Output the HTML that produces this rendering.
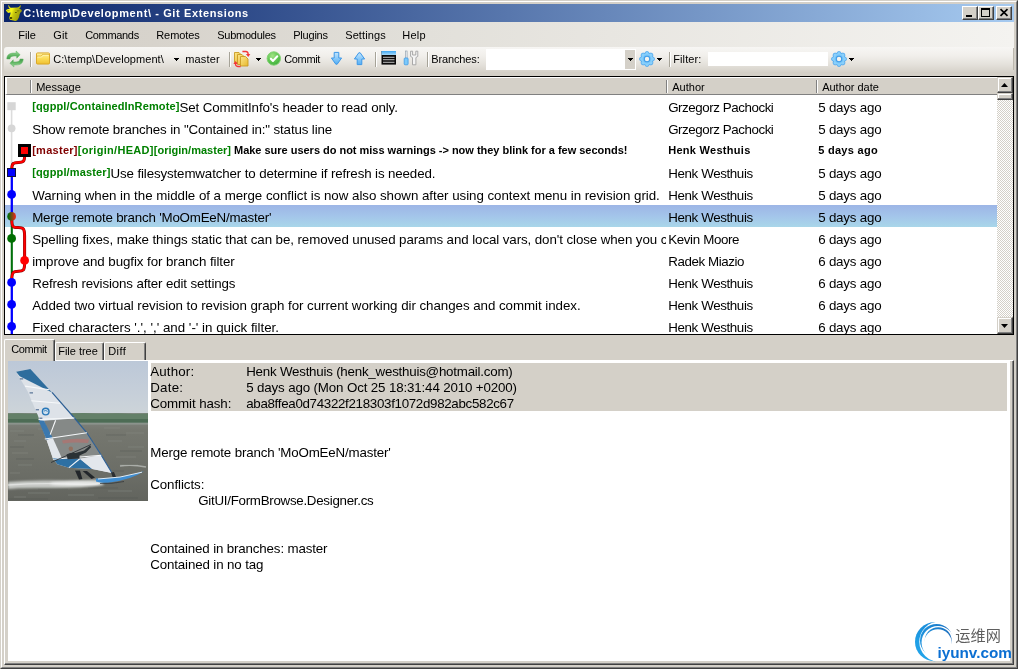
<!DOCTYPE html>
<html><head><meta charset="utf-8"><title>Git Extensions</title>
<style>
*{box-sizing:border-box;margin:0;padding:0}
html,body{width:1018px;height:669px;overflow:hidden;background:#d4d0c8}
body{font-family:"Liberation Sans","Noto Sans CJK SC",sans-serif;font-size:11px;color:#000;position:relative}
.abs{position:absolute}
#root{position:absolute;left:0;top:0;width:1018px;height:669px;overflow:hidden;will-change:transform}
#win{position:absolute;left:0;top:0;width:1018px;height:669px;background:#d4d0c8;border-top:1px solid #d4d0c8;border-left:1px solid #d4d0c8;border-right:1px solid #404040;border-bottom:1px solid #404040}
#win2{position:absolute;left:1px;top:1px;width:1016px;height:667px;border-top:1px solid #fff;border-left:1px solid #fff;border-right:1px solid #808080;border-bottom:1px solid #808080}
#title{position:absolute;left:4px;top:4px;width:1010px;height:18px;background:linear-gradient(to right,#0a246a 0%,#a6caf0 100%);color:#fff;font-weight:bold;font-size:11px;line-height:18px;white-space:nowrap}
#title span{position:absolute;left:20px;top:0}
.cbtn{position:absolute;top:6px;width:16px;height:14px;background:#d4d0c8;border-top:1px solid #fff;border-left:1px solid #fff;border-right:1px solid #404040;border-bottom:1px solid #404040;box-shadow:inset -1px -1px 0 #808080}
#menu{position:absolute;left:4px;top:22px;width:1010px;height:25px;background:linear-gradient(to right,#d4d0c8 0%,#d7d3cc 15%,#e2e0da 42%,#e8e6e1 60%,#f4f3f0 100%)}
#menu span{position:absolute;top:1px;line-height:24px;font-size:11px;white-space:nowrap}
#tool{position:absolute;left:4px;top:47px;width:1010px;height:25px;border-radius:3px 0 0 3px;background:linear-gradient(to bottom,#f7f6f4 0%,#f1efeb 35%,#e4e1db 70%,#d6d2ca 100%)}
.tt{position:absolute;top:47px;line-height:24px;font-size:11px;white-space:nowrap}
.sep{position:absolute;top:52px;width:2px;height:15px;border-left:1px solid #a6a398;border-right:1px solid #fff}
.dar{position:absolute;width:0;height:0;border-left:2.5px solid transparent;border-right:2.5px solid transparent;border-top:3px solid #000}
#grid{position:absolute;left:4px;top:76px;width:1010px;height:259px;background:#fff;border:1px solid #000;overflow:hidden}
#ghead{position:absolute;left:0;top:0;width:992px;height:18px;background:#d4d0c8;border-top:1px solid #fff;border-left:2px solid #fff;border-bottom:1px solid #808080}
.hsep{position:absolute;top:2px;width:2px;height:13px;border-left:1px solid #808080;border-right:1px solid #fff}
.ht{position:absolute;top:1px;line-height:17px;font-size:11px;white-space:nowrap}
.row{position:absolute;left:0;width:992px;height:22px}
.row span{position:absolute;top:2px;line-height:22px;font-size:13.33px;white-space:nowrap}
.row .m{left:27.2px;width:633.8px;overflow:hidden;height:20px}
.row .m i{font-style:normal;font-weight:bold;font-size:11px;position:relative;top:-2.5px}.row .m b{font-size:11px;position:relative;top:-2px}.row.bold .a,.row.bold .d{font-size:11px;top:0px}
.row .m u{text-decoration:none}
.g{color:#008000}.r{color:#800000}
.row .a{left:663.2px}.row .d{left:813.2px}
.sel{background:linear-gradient(to bottom,#9db5e6 0%,#a3c5ea 50%,#a9d6e9 100%)}
#sb{position:absolute;left:992px;top:0;width:16px;height:257px;background-color:#e9e7e3;background-image:conic-gradient(#fff 25%,#d4d0c8 0 50%,#fff 0 75%,#d4d0c8 0);background-size:2px 2px}
.sbtn{position:absolute;left:0;width:16px;background:#d4d0c8;border-top:1px solid #d4d0c8;border-left:1px solid #d4d0c8;border-right:1px solid #404040;border-bottom:1px solid #404040;box-shadow:inset -1px -1px 0 #808080,inset 1px 1px 0 #fff}
.tab{position:absolute;background:#d4d0c8;border-top:1px solid #fff;border-left:1px solid #fff;border-right:1px solid #404040;border-radius:2px 2px 0 0;box-shadow:inset -1px 0 0 #808080;font-size:11px;white-space:nowrap}
#page{position:absolute;left:4px;top:360px;width:1010px;height:305px;background:#d4d0c8;border-left:1px solid #fff;border-top:1px solid #fff;border-right:1px solid #404040;border-bottom:1px solid #404040;box-shadow:inset -1px -1px 0 #808080}#pagein{position:absolute;left:8px;top:361px;width:1002px;height:300px;background:#fff}
#dh{position:absolute;left:151px;top:363px;width:856px;height:48px;background:#d4d0c8}
.dt{position:absolute;font-size:13.33px;line-height:16px;white-space:nowrap;margin-top:1px}

#ttl,#menu span,.ht,.tt,.dt,.tab span{margin-left:-0.8px}

#ttl{letter-spacing:0.613px}#m1{letter-spacing:-0.034px}#m2{letter-spacing:0.179px}#m3{letter-spacing:-0.331px}#m4{letter-spacing:-0.062px}#m5{letter-spacing:-0.256px}#m6{letter-spacing:-0.211px}#m7{letter-spacing:0.106px}#m8{letter-spacing:0.244px}#h1{letter-spacing:-0.006px}#h2{letter-spacing:0.030px}#h3{letter-spacing:-0.025px}#l1{letter-spacing:0.123px}#x1{letter-spacing:-0.109px}#x2{letter-spacing:-0.131px}#l3a{letter-spacing:0.274px}#l3b{letter-spacing:0.299px}#l3c{letter-spacing:0.012px}#x3{letter-spacing:-0.016px}#l4{letter-spacing:0.135px}#x4{letter-spacing:-0.126px}#x5{letter-spacing:-0.036px}#x6{letter-spacing:-0.207px}#x7{letter-spacing:-0.091px}#x8{letter-spacing:-0.078px}#x9{letter-spacing:-0.137px}#x10{letter-spacing:-0.045px}#x11{letter-spacing:-0.006px}#a1{letter-spacing:-0.435px}#a2{letter-spacing:-0.435px}#a3{letter-spacing:0.288px}#a4{letter-spacing:-0.369px}#a5{letter-spacing:-0.369px}#a6{letter-spacing:-0.369px}#a7{letter-spacing:-0.348px}#a8{letter-spacing:-0.413px}#a9{letter-spacing:-0.369px}#a10{letter-spacing:-0.369px}#a11{letter-spacing:-0.369px}#d1{letter-spacing:-0.202px}#d2{letter-spacing:-0.202px}#d3{letter-spacing:0.294px}#d4{letter-spacing:-0.202px}#d5{letter-spacing:-0.202px}#d6{letter-spacing:-0.202px}#d7{letter-spacing:-0.202px}#d8{letter-spacing:-0.202px}#d9{letter-spacing:-0.202px}#d10{letter-spacing:-0.202px}#d11{letter-spacing:-0.202px}#tb_c{letter-spacing:-0.382px}#tb_f{letter-spacing:-0.017px}#tb_d{letter-spacing:0.447px}#k1{letter-spacing:0.159px}#v1{letter-spacing:-0.225px}#k2{letter-spacing:0.248px}#v2{letter-spacing:-0.141px}#k3{letter-spacing:-0.093px}#v3{letter-spacing:-0.308px}#b1{letter-spacing:-0.171px}#b2{letter-spacing:-0.071px}#b3{letter-spacing:-0.273px}#b4{letter-spacing:-0.152px}#b5{letter-spacing:-0.132px}#tt1{letter-spacing:0.058px}#tt2{letter-spacing:0.163px}#tt3{letter-spacing:-0.348px}#tt4{letter-spacing:-0.115px}#tt5{letter-spacing:0.114px}
</style></head><body>
<div id="root">
<div id="win"></div><div id="win2"></div>
<div id="title"><span id="ttl">C:\temp\Development\ - Git Extensions</span></div>
<div class="cbtn" style="left:962px"></div><div class="cbtn" style="left:978px"></div><div class="cbtn" style="left:996px"></div>
<div class="abs" style="left:966px;top:15px;width:6px;height:2px;background:#000"></div>
<div class="abs" style="left:981px;top:8px;width:9px;height:9px;border:1px solid #000;border-top-width:2px"></div>
<svg class="abs" style="left:999px;top:8px" width="10" height="9" viewBox="0 0 10 9"><path d="M1.5 1.2 L8.5 7.8 M8.5 1.2 L1.5 7.8" stroke="#000" stroke-width="1.7" fill="none"/></svg>
<svg class="abs" style="left:5px;top:4px" width="19" height="18" viewBox="0 0 19 18">
<defs><linearGradient id="cw" x1="0" y1="0" x2="1" y2="0.35"><stop offset="0" stop-color="#e6e60c"/><stop offset="0.42" stop-color="#f8f818"/><stop offset="0.62" stop-color="#c4c40c"/><stop offset="1" stop-color="#9a9a06"/></linearGradient>
<filter id="cb" x="-10%" y="-10%" width="120%" height="120%"><feGaussianBlur stdDeviation="0.35"/></filter></defs>
<g filter="url(#cb)">
<path d="M3.2 1.2 Q4.3 1 4.3 2.2 Q4.5 3.6 6 3.7 L12.2 3.5 Q14 3.4 14.9 1.8 Q15.5 1 16 1.6 Q15.6 4.2 14 4.8 L15.2 5 Q16.6 5.6 16.9 6.8 Q16.4 8.4 15.2 8.8 L14.6 10.4 L13.9 13.4 Q13 15.8 11 16.9 Q9.4 17.2 8.2 16.6 L5 15.7 Q4 14.6 4.4 13.2 L5.5 9.8 L5.4 8.2 L3.8 8.9 Q2.2 8.4 0.9 6.4 Q1.6 5 3 4.9 L5 4.9 Q3.4 4 3.2 1.2 Z" fill="url(#cw)"/>
<path d="M11.6 6.4 Q13.4 5.6 14.8 6.6 Q14 7.8 12.2 7.8 Z" fill="#7e7e08" opacity="0.75"/>
<ellipse cx="10.9" cy="8.5" rx="1" ry="0.55" fill="#4a4a04"/>
<ellipse cx="5.9" cy="13.9" rx="1.4" ry="1" fill="#3e3a02"/>
<path d="M2 6.2 Q3.4 5.6 4.8 6.6 Q3.6 7.6 2.6 7.4 Z" fill="#a0a008" opacity="0.7"/>
</g>
</svg>

<div id="menu"><span id="m1" style="left:15px">File</span><span id="m2" style="left:50px">Git</span><span id="m3" style="left:82px">Commands</span><span id="m4" style="left:153px">Remotes</span><span id="m5" style="left:214px">Submodules</span><span id="m6" style="left:290px">Plugins</span><span id="m7" style="left:342px">Settings</span><span id="m8" style="left:399px">Help</span></div>
<div id="tool"></div>
<svg class="abs" style="left:6px;top:50px" width="18" height="18" viewBox="0 0 18 18">
<defs><linearGradient id="gg" x1="0" y1="0" x2="0" y2="1"><stop offset="0" stop-color="#a4dca2"/><stop offset="0.55" stop-color="#62b764"/><stop offset="1" stop-color="#3f9a48"/></linearGradient></defs>
<g id="rfa"><path d="M0.8 8.9 C1 3.6 5 2.7 10.2 3.1 L10.1 1 L14.1 4.7 L10.8 8.2 L10.6 6.1 C6.5 5.7 4.4 6.2 3.9 9 Z" fill="url(#gg)" stroke="#5fb062" stroke-width="0.5" stroke-linejoin="round"/></g>
<use href="#rfa" transform="rotate(180 9 9)"/>
</svg>
<div class="sep" style="left:30px"></div>
<svg class="abs" style="left:35px;top:51.5px" width="16" height="13" viewBox="0 0 16 14" preserveAspectRatio="none">
<defs><linearGradient id="fg" x1="0" y1="0" x2="0" y2="1"><stop offset="0" stop-color="#fff0a0"/><stop offset="0.5" stop-color="#fbdc58"/><stop offset="1" stop-color="#efc030"/></linearGradient></defs>
<path d="M1.5 2 Q1.5 1 2.5 1 L13.5 1 Q14.5 1 14.5 2 L14.5 12 Q14.5 13 13.5 13 L2.5 13 Q1.5 13 1.5 12 Z" fill="url(#fg)" stroke="#d8a624" stroke-width="1"/>
<path d="M2 4.5 L6.2 4.5 L7.6 2.6 L14 2.6" fill="none" stroke="#e0ae2c" stroke-width="0.9"/>
<path d="M2.4 5.4 L6.6 5.4 L8 3.5 L13.6 3.5" fill="none" stroke="#fff6c0" stroke-width="0.8"/>
</svg>
<span class="tt" id="tt1" style="left:54px">C:\temp\Development\</span>
<svg class="abs" style="left:174px;top:58px" width="5" height="3" viewBox="0 0 5 3" shape-rendering="crispEdges"><path d="M0 0h5v1h-5zM1 1h3v1h-3zM2 2h1v1h-1z" fill="#000"/></svg>
<span class="tt" id="tt2" style="left:186px">master</span>
<div class="sep" style="left:229px"></div>
<svg class="abs" style="left:233px;top:50px" width="18" height="18" viewBox="0 0 18 18">
<defs><linearGradient id="dg" x1="0" y1="0" x2="1" y2="1"><stop offset="0" stop-color="#fce58a"/><stop offset="1" stop-color="#e8b92e"/></linearGradient></defs>
<path d="M1.5 2.5 L6 2.5 L8.5 5 L8.5 12.5 L1.5 12.5 Z" fill="url(#dg)" stroke="#c99a22" stroke-width="0.9"/>
<path d="M4.5 4.5 L9 4.5 L11.5 7 L11.5 14.5 L4.5 14.5 Z" fill="url(#dg)" stroke="#c99a22" stroke-width="0.9"/>
<path d="M7.5 6.5 L12.5 6.5 L15 9 L15 16 L7.5 16 Z" fill="url(#dg)" stroke="#c99a22" stroke-width="0.9"/>
<path d="M9.4 1.5 L12.8 1.5 Q15.2 1.6 15.2 4.4" fill="none" stroke="#f43838" stroke-width="1.3"/>
<path d="M12.9 4.1 L15.2 7 L17.3 4.1 Z" fill="#f43838"/>
<path d="M7.7 16.5 L4.8 16.5 Q2.4 16.4 2.4 13.6" fill="none" stroke="#f43838" stroke-width="1.3"/>
<path d="M0.4 13.9 L2.5 11 L4.8 13.9 Z" fill="#f43838"/>
</svg>
<svg class="abs" style="left:256px;top:58px" width="5" height="3" viewBox="0 0 5 3" shape-rendering="crispEdges"><path d="M0 0h5v1h-5zM1 1h3v1h-3zM2 2h1v1h-1z" fill="#000"/></svg>
<svg class="abs" style="left:265px;top:50px" width="18" height="18" viewBox="0 0 18 18">
<defs><radialGradient id="cg" cx="0.4" cy="0.3" r="0.8"><stop offset="0" stop-color="#a2e486"/><stop offset="0.6" stop-color="#58c24c"/><stop offset="1" stop-color="#3aa63c"/></radialGradient></defs>
<circle cx="8.8" cy="8.5" r="6.7" fill="url(#cg)" stroke="#84d274" stroke-width="1"/>
<path d="M5.9 8.7 L8 10.9 L12.3 6.3" fill="none" stroke="#fff" stroke-width="2.1" stroke-linecap="round" stroke-linejoin="round"/>
</svg>
<span class="tt" id="tt3" style="left:285px">Commit</span>
<svg class="abs" style="left:329px;top:51px" width="16" height="16" viewBox="0 0 16 16">
<defs><linearGradient id="bg1" x1="0" y1="0" x2="0" y2="1"><stop offset="0" stop-color="#c2e5fd"/><stop offset="1" stop-color="#55aff4"/></linearGradient></defs>
<path d="M5.2 1.4 L9.8 1.4 L9.8 7 L12.6 7 L8.2 13.2 L6.8 13.2 L2.4 7 L5.2 7 Z" fill="url(#bg1)" stroke="#3d98e8" stroke-width="1" stroke-linejoin="round"/>
</svg>
<svg class="abs" style="left:352px;top:51px" width="16" height="16" viewBox="0 0 16 16">
<path d="M5.2 13.6 L9.8 13.6 L9.8 8 L12.6 8 L8.2 1.8 L6.8 1.8 L2.4 8 L5.2 8 Z" fill="url(#bg1)" stroke="#3d98e8" stroke-width="1" stroke-linejoin="round"/>
</svg>
<div class="sep" style="left:375px"></div>
<svg class="abs" style="left:381px;top:50px" width="16" height="16" viewBox="0 0 16 16">
<defs><linearGradient id="lg1" x1="0" y1="0" x2="0" y2="1"><stop offset="0" stop-color="#3fa6f2"/><stop offset="1" stop-color="#a8dcfb"/></linearGradient></defs>
<rect x="0.5" y="1" width="14.5" height="13.6" fill="#0a0a0a"/>
<rect x="0.5" y="1" width="14.5" height="4" fill="url(#lg1)"/>
<rect x="2" y="6.8" width="11.5" height="0.9" fill="#d6d6d6"/><rect x="2" y="9.3" width="11.5" height="0.9" fill="#d6d6d6"/><rect x="2" y="11.8" width="11.5" height="0.9" fill="#d6d6d6"/>
</svg>
<svg class="abs" style="left:403px;top:50px" width="17" height="16" viewBox="0 0 17 16">
<rect x="2.3" y="1" width="1.8" height="7.2" fill="#eef2f6" stroke="#8a98a6" stroke-width="0.6"/>
<rect x="1.2" y="8" width="3.9" height="6.8" rx="0.9" fill="#7cc9fa" stroke="#3f9be6" stroke-width="0.8"/>
<path d="M7.6 1.2 L9.6 1.2 L9.6 5 L12.8 5 L12.8 1.2 L14.8 1.2 L14.8 6.4 L12.9 7.6 L12.9 14.8 L9.5 14.8 L9.5 7.6 L7.6 6.4 Z" fill="#f4f4f4" stroke="#a0a0a0" stroke-width="0.9" stroke-linejoin="round"/>
</svg>
<div class="sep" style="left:427px"></div>
<span class="tt" id="tt4" style="left:432px">Branches:</span>
<div class="abs" style="left:486px;top:49px;width:150px;height:21px;background:#fff"></div>
<div class="abs" style="left:625px;top:50px;width:10px;height:19px;background:#d4d0c8"></div>
<svg class="abs" style="left:628px;top:58px" width="5" height="3" viewBox="0 0 5 3" shape-rendering="crispEdges"><path d="M0 0h5v1h-5zM1 1h3v1h-3zM2 2h1v1h-1z" fill="#000"/></svg>
<svg class="abs" style="left:638px;top:50px" width="18" height="18" viewBox="0 0 18 18">
<defs><radialGradient id="gr" cx="0.5" cy="0.5" r="0.5"><stop offset="0.3" stop-color="#4aa8ee"/><stop offset="0.7" stop-color="#7cccf8"/><stop offset="1" stop-color="#4fa8ec"/></radialGradient></defs>
<g id="gear"><g fill="#8ad0fb" stroke="#4aa4ee" stroke-width="0.8"><circle cx="9.00" cy="3.60" r="2.1"/><circle cx="12.82" cy="5.18" r="2.1"/><circle cx="14.40" cy="9.00" r="2.1"/><circle cx="12.82" cy="12.82" r="2.1"/><circle cx="9.00" cy="14.40" r="2.1"/><circle cx="5.18" cy="12.82" r="2.1"/><circle cx="3.60" cy="9.00" r="2.1"/><circle cx="5.18" cy="5.18" r="2.1"/></g>
<circle cx="9" cy="9" r="5.6" fill="#8ad0fb"/><circle cx="9" cy="9" r="4.4" fill="#74c3f8"/>
<circle cx="9" cy="9" r="3.2" fill="#3f9ce8"/><circle cx="9" cy="9" r="2.2" fill="#f4f3f0"/></g>
</svg>
<svg class="abs" style="left:657px;top:58px" width="5" height="3" viewBox="0 0 5 3" shape-rendering="crispEdges"><path d="M0 0h5v1h-5zM1 1h3v1h-3zM2 2h1v1h-1z" fill="#000"/></svg>
<div class="sep" style="left:669px"></div>
<span class="tt" id="tt5" style="left:674px">Filter:</span>
<div class="abs" style="left:708px;top:52px;width:120px;height:14px;background:#fff"></div>
<svg class="abs" style="left:830px;top:50px" width="18" height="18" viewBox="0 0 18 18"><use href="#gear"/></svg>
<svg class="abs" style="left:849px;top:58px" width="5" height="3" viewBox="0 0 5 3" shape-rendering="crispEdges"><path d="M0 0h5v1h-5zM1 1h3v1h-3zM2 2h1v1h-1z" fill="#000"/></svg>
<div class="abs" style="left:1013px;top:48px;width:1px;height:22px;background:#bcb8ae"></div>

<div id="grid">
<div id="ghead"><div class="hsep" style="left:23px"></div><span class="ht" id="h1" style="left:30px">Message</span><div class="hsep" style="left:659px"></div><span class="ht" id="h2" style="left:666px">Author</span><div class="hsep" style="left:809px"></div><span class="ht" id="h3" style="left:816px">Author date</span></div>
<div class="row " style="top:18px"><span class="m"><i class="g" id="l1">[qgppl/ContainedInRemote]</i><u id="x1">Set CommitInfo's header to read only.</u></span><span class="a" id="a1">Grzegorz Pachocki</span><span class="d" id="d1">5 days ago</span></div>
<div class="row " style="top:40px"><span class="m"><u id="x2">Show remote branches in "Contained in:" status line</u></span><span class="a" id="a2">Grzegorz Pachocki</span><span class="d" id="d2">5 days ago</span></div>
<div class="row bold" style="top:62px"><span class="m"><i class="r" id="l3a">[master]</i><i class="g" id="l3b">[origin/HEAD]</i><i class="g" id="l3c">[origin/master]</i><b id="x3" style="margin-left:3px">Make sure users do not miss warnings -&gt; now they blink for a few seconds!</b></span><span class="a" id="a3" style="font-weight:bold">Henk Westhuis</span><span class="d" id="d3" style="font-weight:bold">5 days ago</span></div>
<div class="row " style="top:84px"><span class="m"><i class="g" id="l4">[qgppl/master]</i><u id="x4">Use filesystemwatcher to determine if refresh is needed.</u></span><span class="a" id="a4">Henk Westhuis</span><span class="d" id="d4">5 days ago</span></div>
<div class="row " style="top:106px"><span class="m"><u id="x5">Warning when in the middle of a merge conflict is now also shown after using context menu in revision grid.</u></span><span class="a" id="a5">Henk Westhuis</span><span class="d" id="d5">5 days ago</span></div>
<div class="row sel" style="top:128px"><span class="m"><u id="x6">Merge remote branch 'MoOmEeN/master'</u></span><span class="a" id="a6">Henk Westhuis</span><span class="d" id="d6">5 days ago</span></div>
<div class="row " style="top:150px"><span class="m"><u id="x7">Spelling fixes, make things static that can be, removed unused params and local vars, don't close when you</u> c</span><span class="a" id="a7">Kevin Moore</span><span class="d" id="d7">6 days ago</span></div>
<div class="row " style="top:172px"><span class="m"><u id="x8">improve and bugfix for branch filter</u></span><span class="a" id="a8">Radek Miazio</span><span class="d" id="d8">6 days ago</span></div>
<div class="row " style="top:194px"><span class="m"><u id="x9">Refresh revisions after edit settings</u></span><span class="a" id="a9">Henk Westhuis</span><span class="d" id="d9">6 days ago</span></div>
<div class="row " style="top:216px"><span class="m"><u id="x10">Added two virtual revision to revision graph for current working dir changes and commit index.</u></span><span class="a" id="a10">Henk Westhuis</span><span class="d" id="d10">6 days ago</span></div>
<div class="row " style="top:238px"><span class="m"><u id="x11">Fixed characters '.', ',' and '-' in quick filter.</u></span><span class="a" id="a11">Henk Westhuis</span><span class="d" id="d11">6 days ago</span></div>
<div id="sb"><div class="sbtn" style="top:0px;height:16px"></div><div class="sbtn" style="top:16px;height:7px"></div><div class="sbtn" style="top:240px;height:17px"></div>
<svg class="abs" style="left:4px;top:5px" width="8" height="6" viewBox="0 0 8 6"><path d="M0 5 L3.5 1 L7 5 Z" fill="#000"/></svg>
<svg class="abs" style="left:4px;top:246px" width="8" height="6" viewBox="0 0 8 6"><path d="M0 1 L3.5 5 L7 1 Z" fill="#000"/></svg></div>
<svg class="abs" style="left:0;top:0" width="30" height="257" viewBox="5 77 30 257">
<defs><linearGradient id="mg" x1="0" y1="0" x2="1" y2="0"><stop offset="0.15" stop-color="#0b6b0b"/><stop offset="0.9" stop-color="#e02a1a"/></linearGradient></defs>
<path d="M11.6 106 L11.6 166" stroke="#dcdcdc" stroke-width="1.6" fill="none"/>
<rect x="7.3" y="102.2" width="8.4" height="8" fill="#d6d6d6"/>
<circle cx="11.6" cy="128.3" r="3.9" fill="#d6d6d6"/>
<path d="M11.8 172 L11.8 216" stroke="#0000ff" stroke-width="2.3" fill="none"/>
<path d="M11.8 218 L11.8 280" stroke="#00700a" stroke-width="2.1" fill="none"/>
<path d="M11.8 282 L11.8 334" stroke="#0000ff" stroke-width="2.3" fill="none"/>
<path d="M24.6 156 C24.6 162 23 162.2 18.5 162.4 C13.5 162.6 11.8 163 11.8 169" stroke="#7a0000" stroke-width="3" fill="none"/>
<path d="M24.6 156 C24.6 162 23 162.2 18.5 162.4 C13.5 162.6 11.8 163 11.8 169" stroke="#ff0000" stroke-width="2.1" fill="none"/>
<path d="M11.8 219 C11.8 227.5 13 227.5 18 227.5 C23 227.5 24.6 228 24.6 236 L24.6 258" stroke="#7a0000" stroke-width="3" fill="none"/>
<path d="M11.8 219 C11.8 227.5 13 227.5 18 227.5 C23 227.5 24.6 228 24.6 236 L24.6 258" stroke="#ff0000" stroke-width="2.1" fill="none"/>
<path d="M24.6 263 C24.6 271 23 271.2 18.5 271.2 C13.5 271.2 11.8 272 11.8 280" stroke="#7a0000" stroke-width="3" fill="none"/>
<path d="M24.6 263 C24.6 271 23 271.2 18.5 271.2 C13.5 271.2 11.8 272 11.8 280" stroke="#ff0000" stroke-width="2.1" fill="none"/>
<rect x="18" y="144" width="13" height="13" fill="#000"/><rect x="21" y="147" width="7" height="7" fill="#ff0000"/>
<rect x="7" y="168" width="9" height="9" fill="#101040"/><rect x="8" y="169" width="7" height="7" fill="#0000ff"/>
<circle cx="11.6" cy="194.4" r="4.4" fill="#0000ff"/>
<circle cx="11.6" cy="216.4" r="4.4" fill="url(#mg)"/>
<circle cx="11.6" cy="238.4" r="4.4" fill="#006e00"/>
<circle cx="24.6" cy="260.4" r="4.4" fill="#ff0000"/>
<circle cx="11.6" cy="282.4" r="4.4" fill="#0000ff"/>
<circle cx="11.6" cy="304.4" r="4.4" fill="#0000ff"/>
<circle cx="11.6" cy="326.4" r="4.4" fill="#0000ff"/>
</svg>

</div>
<div id="page"></div><div id="pagein"></div>
<div class="tab" style="left:4px;top:339px;width:51px;height:22px;line-height:19px;padding-left:7px"><span id="tb_c">Commit</span></div>
<div class="tab" style="left:55px;top:342px;width:49px;height:18px;line-height:17px;padding-left:3px"><span id="tb_f">File tree</span></div>
<div class="tab" style="left:104px;top:342px;width:42px;height:18px;line-height:17px;padding-left:4px"><span id="tb_d">Diff</span></div>
<div id="dh"></div>
<svg class="abs" style="left:8px;top:361px" width="140" height="140" viewBox="0 0 140 140">
<defs>
<linearGradient id="sky" x1="0" y1="0" x2="0" y2="1"><stop offset="0" stop-color="#bcc8d8"/><stop offset="0.6" stop-color="#c6cfd9"/><stop offset="1" stop-color="#cdd4d9"/></linearGradient>
<linearGradient id="wat" x1="0" y1="0" x2="0" y2="1"><stop offset="0" stop-color="#878b86"/><stop offset="0.2" stop-color="#75776f"/><stop offset="0.7" stop-color="#6b6d66"/><stop offset="1" stop-color="#62645e"/></linearGradient>
<filter id="bl" x="-5%" y="-5%" width="110%" height="110%"><feGaussianBlur stdDeviation="0.45"/></filter>
<filter id="bl2" x="-10%" y="-50%" width="120%" height="200%"><feGaussianBlur stdDeviation="1.1"/></filter>
<clipPath id="pc"><rect width="140" height="140"/></clipPath>
</defs>
<g clip-path="url(#pc)">
<rect width="140" height="53" fill="url(#sky)"/>
<rect y="52" width="140" height="88" fill="url(#wat)"/>
<path d="M0 52.6 L10 52.2 L25 52.8 L40 52.3 L60 52.6 L75 52 L90 52.5 L110 52.2 L125 52.7 L140 52.4 L140 62 L0 62 Z" fill="#638068" filter="url(#bl)"/>
<rect y="58" width="140" height="4" fill="#3f5f48" opacity="0.6" filter="url(#bl)"/>
<rect y="61.6" width="140" height="2" fill="#8f9892" opacity="0.8" filter="url(#bl)"/>
<g stroke="#888d86" stroke-width="0.9" opacity="0.55" filter="url(#bl)">
<path d="M2 70 h14 M30 68 h10 M96 67 h16 M118 72 h18 M6 80 h12 M100 80 h14 M120 86 h16 M4 92 h16 M108 96 h20 M10 104 h14 M112 104 h18 M2 112 h10 M20 132 h22 M60 134 h26 M100 130 h24 M6 136 h12"/>
</g>
<g stroke="#50534e" stroke-width="1" opacity="0.4" filter="url(#bl)">
<path d="M10 74 h16 M98 74 h20 M2 86 h14 M112 90 h22 M8 98 h18 M104 110 h12 M30 128 h30 M80 127 h30 M0 138 h40 M90 137 h40"/>
</g>
<path d="M0 121 Q20 119 45 119.5 T93 118.5 L96 124 Q70 127.5 40 127 T0 128 Z" fill="#dfe2df" opacity="0.8" filter="url(#bl2)"/>
<ellipse cx="68" cy="122.5" rx="26" ry="2.4" fill="#f2f3f2" opacity="0.7" filter="url(#bl2)"/>
<path d="M0 124 Q30 122 60 123 T92 122" stroke="#f4f4f4" stroke-width="1.4" fill="none" opacity="0.55" filter="url(#bl)"/>
<path d="M112 105 Q124 103 138 106" stroke="#cfd2cf" stroke-width="1.4" fill="none" opacity="0.6" filter="url(#bl)"/>
<g filter="url(#bl)">
<path d="M8.1 10.8 L22.4 8.1 L44 31.4 L66.4 57 L79 72 L93.3 94.2 L104 112 L84.3 107.9 L61 106.8 L49.3 103.2 L44.9 96.9 L38.6 79 L29.6 53.8 L19.7 30.5 Z" fill="#dde2e8"/>
<path d="M8.1 10.8 L22.4 8.1 L44 31.4 L11.7 15.3 Z" fill="#2f6d9d"/>
<path d="M36 59.8 L66.4 57.4 L79 72 L93.3 94.2 L71.8 97.8 L52 98.6 Z" fill="#858987"/>
<path d="M36.4 60 L47.2 59.4 L42 73.8 L40.2 74.4 Z" fill="#7b807e"/>
<path d="M30.5 59.2 L36 59.8 L44.9 77.2 L38.6 79 Z" fill="#3b78ae"/>
<path d="M38.6 79 L44.9 77.2 L53.8 97 L44.9 97.8 Z" fill="#e2e6ea"/>
<path d="M44.9 97 L71.8 97.8 L84.3 107.9 L61 106.8 L49.3 103.2 Z" fill="#2f6fa3"/>
<path d="M71.8 97.8 L93.3 94.2 L104 112 L84.3 107.9 Z" fill="#e3e7ec"/>
<path d="M44 31.4 L66.4 57 L79 72 L93.3 94.2 L104 112" fill="none" stroke="#2d5f94" stroke-width="1.2"/>
<g stroke="#f6f8fa" stroke-width="1.1" fill="none">
<path d="M17 25.1 L41.3 28.7"/><path d="M23.3 39.8 L52 42.2"/><path d="M30.5 58.4 L66.4 57"/><path d="M36.8 78 L79 71.8"/><path d="M44.9 98.3 L93.3 94.2"/><path d="M47.6 59.2 L42.2 73.6"/><path d="M71.8 97.8 L61 106.6"/>
</g>
<g stroke="#3c5c86" stroke-width="1"><path d="M11.8 17.9 h3.4 M21.6 31.9 h3.4 M27.8 48.8 h3.2 M31.4 57.2 h3"/></g>
<circle cx="37.7" cy="50.6" r="3.3" fill="#cfe0ee" stroke="#2a78b8" stroke-width="1.4"/><path d="M35.8 50.2 Q37.7 48.6 39.6 50.4" stroke="#2a78b8" stroke-width="0.9" fill="none"/>
<path d="M54 79.5 Q66 76.5 81 78.5 L80 82 Q66 80.5 55 82.6 Z" fill="#c06a66" opacity="0.55"/>
<path d="M43 101.5 L60 94 L83 83.5" stroke="#30343a" stroke-width="0.9" fill="none"/>
<circle cx="62.8" cy="87.8" r="2.2" fill="#94705e"/>
<path d="M58.5 93.6 Q62.5 91 67.5 92 L76 89.5 L82 84.6 L83.2 86 L78 91.4 L71.5 94.6 L71.5 97.6 L59.6 98.2 Z" fill="#2b3034"/>
<path d="M67 109.4 L72 109.4 L74.4 118 L71 118.6 Z M74.6 110 L79 110 L87 116.6 L83.6 118 Z" fill="#24282b"/>
<path d="M103 111.5 L106 111 L108 116 L105 117 Z" fill="#2a2e30"/>
<path d="M88 117.5 Q112 118 135.8 110.2 Q124 118.5 100 121.8 Q92 122 88 120.5 Z" fill="#3f8ed2"/>
<path d="M90 118 Q112 117.5 134 111.2" stroke="#dfeaf4" stroke-width="1" fill="none"/>
<path d="M92 122.5 Q104 123 116 120.5" stroke="#2c3036" stroke-width="1" fill="none" opacity="0.7"/>
</g>
</g>
</svg>

<span class="dt" id="k1" style="left:151px;top:363px">Author:</span><span class="dt" id="v1" style="left:247px;top:363px">Henk Westhuis (henk_westhuis@hotmail.com)</span>
<span class="dt" id="k2" style="left:151px;top:379px">Date:</span><span class="dt" id="v2" style="left:247px;top:379px">5 days ago (Mon Oct 25 18:31:44 2010 +0200)</span>
<span class="dt" id="k3" style="left:151px;top:395px">Commit hash:</span><span class="dt" id="v3" style="left:247px;top:395px">aba8ffea0d74322f218303f1072d982abc582c67</span>
<span class="dt" id="b1" style="left:151px;top:444px">Merge remote branch 'MoOmEeN/master'</span>
<span class="dt" id="b2" style="left:151px;top:476px">Conflicts:</span>
<span class="dt" id="b3" style="left:199px;top:492px">GitUI/FormBrowse.Designer.cs</span>
<span class="dt" id="b4" style="left:151px;top:540px">Contained in branches: master</span>
<span class="dt" id="b5" style="left:151px;top:556px">Contained in no tag</span>
<svg class="abs" style="left:908px;top:616px" width="108" height="50" viewBox="908 616 108 50">
<defs><linearGradient id="sw1" x1="0" y1="0" x2="0" y2="1"><stop offset="0" stop-color="#1786d6"/><stop offset="0.5" stop-color="#1f9fe6"/><stop offset="1" stop-color="#22a4ea"/></linearGradient>
<linearGradient id="sw2" x1="0" y1="0" x2="1" y2="0"><stop offset="0" stop-color="#20a0e8"/><stop offset="0.6" stop-color="#1a78c8"/><stop offset="1" stop-color="#184a98"/></linearGradient>
<mask id="mk1" maskUnits="userSpaceOnUse" x="908" y="616" width="60" height="50"><circle cx="934.5" cy="641.7" r="19.5" fill="#fff"/><circle cx="939.5" cy="641.7" r="20.2" fill="#000"/></mask>
<mask id="mk2" maskUnits="userSpaceOnUse" x="908" y="616" width="60" height="50"><circle cx="936.5" cy="640.5" r="16.5" fill="#fff"/><circle cx="938" cy="642.5" r="16.45" fill="#000"/></mask>
<mask id="mk3" maskUnits="userSpaceOnUse" x="908" y="616" width="60" height="50"><circle cx="938.2" cy="640.6" r="13.4" fill="#fff"/><circle cx="937.86" cy="642.98" r="13.8" fill="#000"/></mask>
</defs>
<rect x="908" y="616" width="60" height="50" fill="url(#sw1)" mask="url(#mk1)"/>
<rect x="908" y="616" width="60" height="50" fill="url(#sw2)" mask="url(#mk2)"/>
<rect x="908" y="616" width="60" height="50" fill="url(#sw2)" mask="url(#mk3)"/>
<text id="lg_cn" x="955.3" y="640.6" font-family="'Liberation Sans','Noto Sans CJK SC',sans-serif" font-size="15.2" fill="#5e5e5e">运维网</text>
<text id="lg_en" x="937.4" y="657.6" font-family="'Liberation Sans',sans-serif" font-size="15.5" font-weight="bold" fill="#0b6fd2" textLength="74.5" lengthAdjust="spacingAndGlyphs">iyunv.com</text>
</svg>

</div>
</body></html>
